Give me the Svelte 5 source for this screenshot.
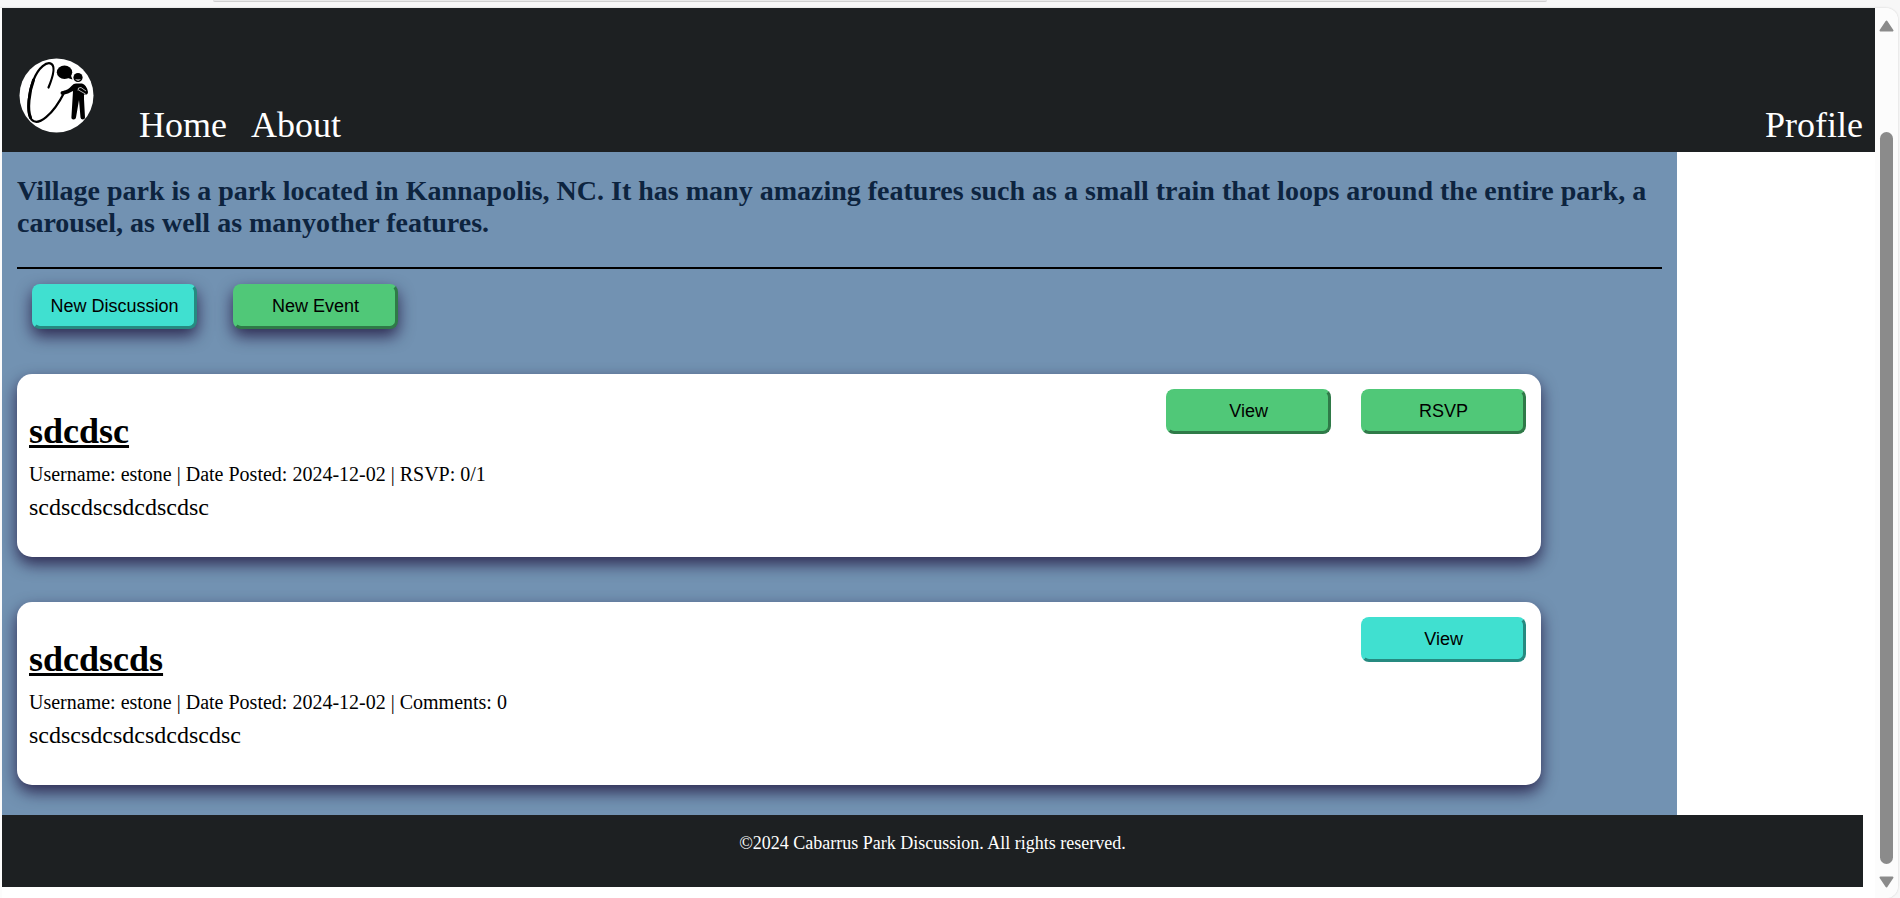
<script>
  const description =
    'Village park is a park located in Kannapolis, NC. It has many amazing features such as a small train that loops around the entire park, a carousel, as well as manyother features.';

  const posts = [
    {
      title: 'sdcdsc',
      kind: 'event',
      meta: 'Username: estone | Date Posted: 2024-12-02 | RSVP: 0/1',
      body: 'scdscdscsdcdscdsc',
      actions: ['View', 'RSVP']
    },
    {
      title: 'sdcdscds',
      kind: 'discussion',
      meta: 'Username: estone | Date Posted: 2024-12-02 | Comments: 0',
      body: 'scdscsdcsdcsdcdscdsc',
      actions: ['View']
    }
  ];
</script>

<div class="window">
  <div class="toolbar"><span class="address"></span></div>
  <div class="viewport">
    <div class="page">
      <header>
        <a class="logo" href="#home" aria-label="Cabarrus Park Discussion">
          <svg viewBox="0 0 75 75" aria-hidden="true">
            <circle cx="37.5" cy="37.5" r="37" fill="#fff" />
            <path
              d="M29.500 29.500C33 21 37 9 32.500 6C28 3 19.500 9.500 14.500 22C9 36 7.500 55 12.500 61.500C19 69 34 57 45.500 34"
              fill="none" stroke="#000" stroke-width="2.200" stroke-linecap="round" />
            <path d="M14.500 22C10 34 8 52 11.500 59.500" fill="none" stroke="#000" stroke-width="3" stroke-linecap="round" />
            <ellipse cx="45.500" cy="14.300" rx="7.700" ry="6.800" />
            <path d="M47 19.500l6.500 2-2-5z" />
            <circle cx="59" cy="19.500" r="4.600" />
            <path d="M56 21q3 1.200 6 0q-2.800 3.600-6 0z" fill="#fff" />
            <path
              d="M57 25.500H63Q67.500 26.500 69 34Q69 37 65.500 36.500L65 36.500V41L66 59.500Q66 61.500 63.800 61.500Q61.800 61.500 61.500 59.500L60 42L57 59.500Q56.800 61.500 54.500 61.500Q52.200 61.500 52.400 59.500L54 33L49 35.500Q45 37 42 36.500Q40.500 33 44 33Q49 32 53 27.500Q54.500 25.500 57 25.500z" />
            <path d="M59 32.500Q58.500 29 62 29.500L67 33M59.500 32L66.500 36" fill="none" stroke="#fff" stroke-width=".7" />
          </svg>
        </a>
        <nav>
          <a href="#home">Home</a>
          <a href="#about">About</a>
          <a class="profile" href="#profile">Profile</a>
        </nav>
      </header>

      <main>
        <h1>{description}</h1>
        <hr />
        <div class="create">
          <button class="discussion raised">New Discussion</button>
          <button class="event raised">New Event</button>
        </div>
        {#each posts as post}
          <article>
            <div class="text">
              <h2>{post.title}</h2>
              <p class="meta">{post.meta}</p>
              <p class="body">{post.body}</p>
            </div>
            <div class="actions">
              {#each post.actions as action}
                <button class={post.kind}>{action}</button>
              {/each}
            </div>
          </article>
        {/each}
      </main>

      <footer>©2024 Cabarrus Park Discussion. All rights reserved.</footer>
    </div>
    <div class="scrollbar" aria-hidden="true">
      <svg viewBox="0 0 15 12"><path d="M7.500 1.500L13.500 10.500H1.500z" /></svg>
      <span class="thumb"></span>
      <svg viewBox="0 0 15 12"><path d="M7.500 10.500L13.500 1.500H1.500z" /></svg>
    </div>
  </div>
</div>

<style>
  :global(body) {
    margin: 0;
    background: #f7f7f7;
    overflow: hidden;
  }

  .window {
    display: flex;
    flex-direction: column;
    min-height: 100vh;
    font-family: 'Liberation Serif', 'Times New Roman', serif;
    color: #000;
  }

  .toolbar {
    display: flex;
    height: 8px;
  }

  .address {
    box-sizing: border-box;
    width: 70.2%;
    height: 2px;
    margin-left: 11.2%;
    border-bottom: 1px solid #cfcfcf;
    border-radius: 0 0 12px 12px;
    background: #e9e9e9;
  }

  .viewport {
    flex: 1;
    display: flex;
    margin-right: 2px;
    border-radius: 0 12px 12px 0;
    background: #fcfcfc;
    box-shadow: 0 0 2px #c8c8c8;
    overflow: hidden;
  }

  .page {
    flex: 1;
    margin-left: 2px;
    background: #fff;
  }

  header {
    box-sizing: border-box;
    display: flex;
    align-items: flex-end;
    height: 144px;
    padding: 0 12px 6px 17px;
    background: #1d2022;
  }

  .logo {
    width: 75px;
    height: 75px;
    margin-bottom: 13px;
  }

  .logo svg {
    display: block;
  }

  nav {
    flex: 1;
    display: flex;
    gap: 24px;
    margin-left: 45px;
  }

  nav a {
    color: #fff;
    font-size: 36px;
    line-height: 41px;
    text-decoration: none;
  }

  .profile {
    margin-left: auto;
  }

  main {
    box-sizing: border-box;
    width: 89.43%;
    padding: 23px 15px 30px;
    background: #7292b2;
  }

  h1 {
    margin: 0 0 28px;
    color: #0d243f;
    font-size: 28px;
    line-height: 32px;
  }

  hr {
    height: 2px;
    margin: 0;
    border: 0;
    background: #000;
  }

  .create {
    display: flex;
    gap: 36px;
    margin: 15px 15px 45px;
  }

  button {
    box-sizing: border-box;
    width: 165px;
    height: 45px;
    padding: 0;
    border: 3px solid;
    border-radius: 8px;
    color: #000;
    font-family: 'Liberation Sans', Arial, sans-serif;
    font-size: 18px;
  }

  .discussion {
    border-color: #40e0d0 #268a80 #268a80 #40e0d0;
    background: #40e0d0;
  }

  .event {
    border-color: #50c878 #2f7a48 #2f7a48 #50c878;
    background: #50c878;
  }

  .raised,
  article {
    box-shadow: 0 7px 16px rgba(22, 5, 48, 0.75);
  }

  article {
    box-sizing: border-box;
    display: flex;
    justify-content: space-between;
    align-items: flex-start;
    width: 92.65%;
    min-height: 183px;
    padding: 15px 15px 30px 12px;
    border-radius: 15px;
    background: #fff;
  }

  article + article {
    margin-top: 45px;
  }

  .text {
    padding-top: 22px;
  }

  h2 {
    margin: 0 0 12px;
    font-size: 36px;
    line-height: 40px;
    text-decoration: underline;
    text-decoration-thickness: 3px;
  }

  p {
    margin: 0;
  }

  .meta {
    margin-bottom: 7px;
    font-size: 20px;
    line-height: 23px;
  }

  .body {
    font-size: 24px;
    line-height: 28px;
  }

  .actions {
    display: flex;
    gap: 30px;
  }

  footer {
    box-sizing: border-box;
    height: 72px;
    margin-right: 12px;
    padding-top: 18px;
    background: #1d2022;
    color: #fff;
    font-size: 18px;
    line-height: 21px;
    text-align: center;
  }

  .scrollbar {
    box-sizing: border-box;
    display: flex;
    flex-direction: column;
    align-items: center;
    width: 23px;
    padding: 12px 0 10px;
    background: #fcfcfc;
  }

  .scrollbar svg {
    width: 15px;
    height: 12px;
    fill: #8b8b8b;
    stroke: #8b8b8b;
    stroke-width: 2;
    stroke-linejoin: round;
  }

  .thumb {
    flex: 1;
    width: 13px;
    margin: 100px 0 12px;
    border-radius: 7px;
    background: #8b8b8b;
  }
</style>
